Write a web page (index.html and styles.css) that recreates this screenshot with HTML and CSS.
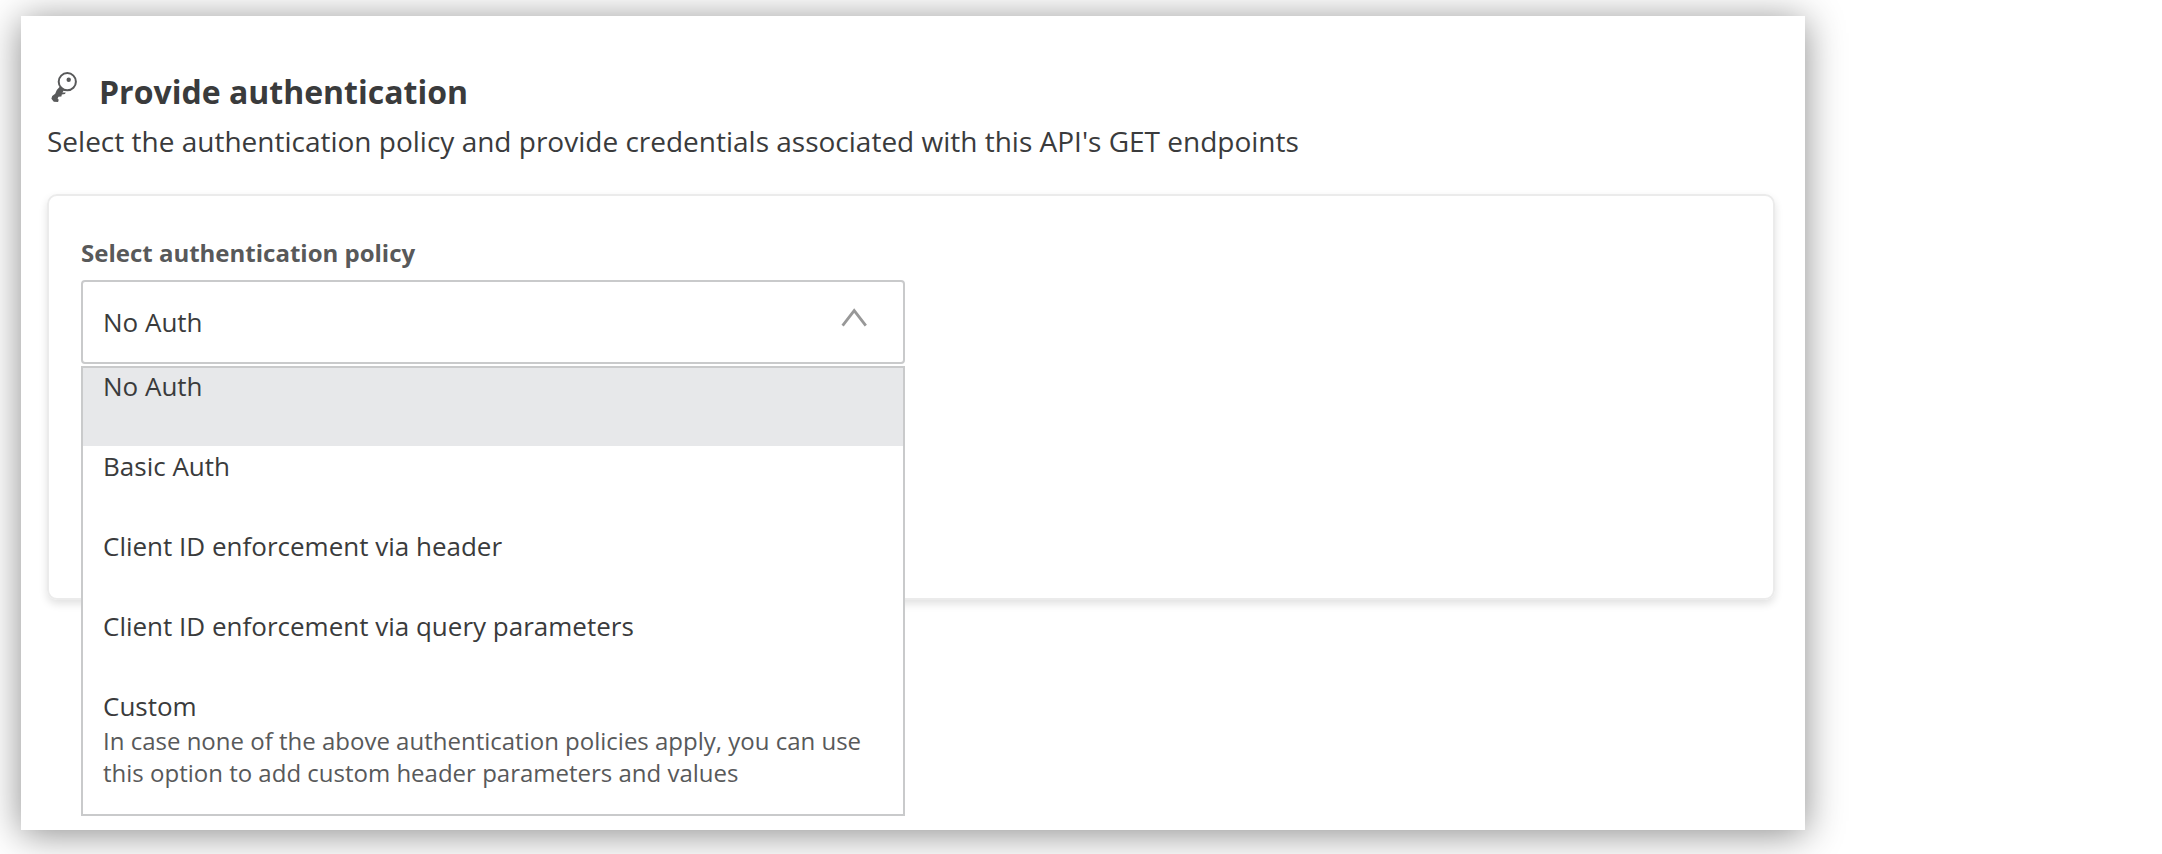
FILE: index.html
```html
<!DOCTYPE html>
<html lang="en">
<head>
<meta charset="utf-8">
<title>Provide authentication</title>
<link rel="stylesheet" href="styles.css">
</head>
<body>
<main class="panel">
  <header class="panel-header">
    <div class="title-row">
      <svg class="key-icon" viewBox="0 0 30 34" aria-hidden="true">
        <circle cx="20.3" cy="11.7" r="8.6" fill="none" stroke="#58595a" stroke-width="2"/>
        <circle cx="21.7" cy="9.7" r="2.2" fill="#58595a"/>
        <path d="M13 16.6L17 20.2L15.4 22.4L18.7 22.6L18 24L14.8 24.6L14.4 26.5L11.5 26.8L10.6 28.5L11.7 29.8L11.1 32L6.8 31.8L4.4 28.8L5.2 26L8.2 23.8L9.8 20Z" fill="#58595a"/>
      </svg>
      <h1 class="title">Provide authentication</h1>
    </div>
    <p class="subtitle">Select the authentication policy and provide credentials associated with this API's GET endpoints</p>
  </header>
  <section class="card">
    <label class="field-label" for="policy">Select authentication policy</label>
    <div class="dropdown">
      <select class="select" id="policy">
        <option selected>No Auth</option>
        <option>Basic Auth</option>
        <option>Client ID enforcement via header</option>
        <option>Client ID enforcement via query parameters</option>
        <option>Custom</option>
      </select>
      <svg class="chevron" viewBox="0 0 28 20" aria-hidden="true">
        <path d="M2.6 18.6L14.2 3.6L25.8 18.6" fill="none" stroke="#989898" stroke-width="2.8"/>
      </svg>
      <ul class="menu" role="listbox" aria-label="Select authentication policy">
        <li class="option option-selected" role="option" aria-selected="true">No Auth</li>
        <li class="option" role="option">Basic Auth</li>
        <li class="option" role="option">Client ID enforcement via header</li>
        <li class="option" role="option">Client ID enforcement via query parameters</li>
        <li class="option" role="option">Custom
          <p class="option-note">In case none of the above authentication policies apply, you can use this option to add custom header parameters and values</p>
        </li>
      </ul>
    </div>
  </section>
</main>
</body>
</html>
```
FILE: styles.css
```css
* {
  box-sizing: border-box;
}

body {
  margin: 0;
  padding: 16px 357px 24px 21px;
  min-height: 100vh;
  display: flex;
  background: #fff;
  color: #3a3b3c;
  font-family: "Open Sans", "Noto Sans", sans-serif;
  overflow: hidden;
}

.panel {
  flex: 1;
  padding: 54px 30px 14px 26px;
  background: #fff;
  box-shadow: 0 4px 36px rgba(0, 0, 0, 0.46);
}

.title-row {
  display: flex;
  align-items: flex-start;
  gap: 22px;
}

.key-icon {
  width: 30px;
  height: 34px;
}

.title {
  margin: 0;
  font-size: 32px;
  line-height: 44px;
  font-weight: 700;
}

.subtitle {
  margin: 7px 0 33px;
  font-size: 28px;
  line-height: 40px;
}

.card {
  min-height: 406px;
  padding: 41px 32px;
  border: 2px solid #ebebeb;
  border-radius: 10px;
  box-shadow: 0 4px 8px rgba(0, 0, 0, 0.12);
}

.field-label {
  display: block;
  margin-bottom: 11px;
  color: #58595a;
  font-size: 24px;
  line-height: 32px;
  font-weight: 700;
}

.dropdown {
  position: relative;
  width: calc(50% - 6px);
}

.select {
  display: block;
  appearance: none;
  width: 100%;
  height: 84px;
  padding: 0 64px 0 20px;
  border: 2px solid #c9cacb;
  border-radius: 4px;
  background: #fff;
  color: inherit;
  font-family: inherit;
  font-size: 26px;
}

.chevron {
  position: absolute;
  top: 27px;
  right: 37px;
  width: 28px;
  height: 20px;
  pointer-events: none;
}

.menu {
  position: absolute;
  top: calc(100% + 2px);
  left: 0;
  right: 0;
  margin: 0;
  padding: 0;
  border: 2px solid #c9cacb;
  background: #fff;
  list-style: none;
}

.option {
  min-height: 80px;
  padding: 1px 20px 0;
  border-bottom: 2px solid transparent;
  background-clip: padding-box;
  font-size: 26px;
  line-height: 34px;
}

.option:last-child {
  padding-bottom: 23px;
}

.option-selected {
  background-color: #e7e8ea;
}

.option-note {
  margin: 2px 0 0;
  color: #58595a;
  font-size: 24px;
  line-height: 32px;
}
```
